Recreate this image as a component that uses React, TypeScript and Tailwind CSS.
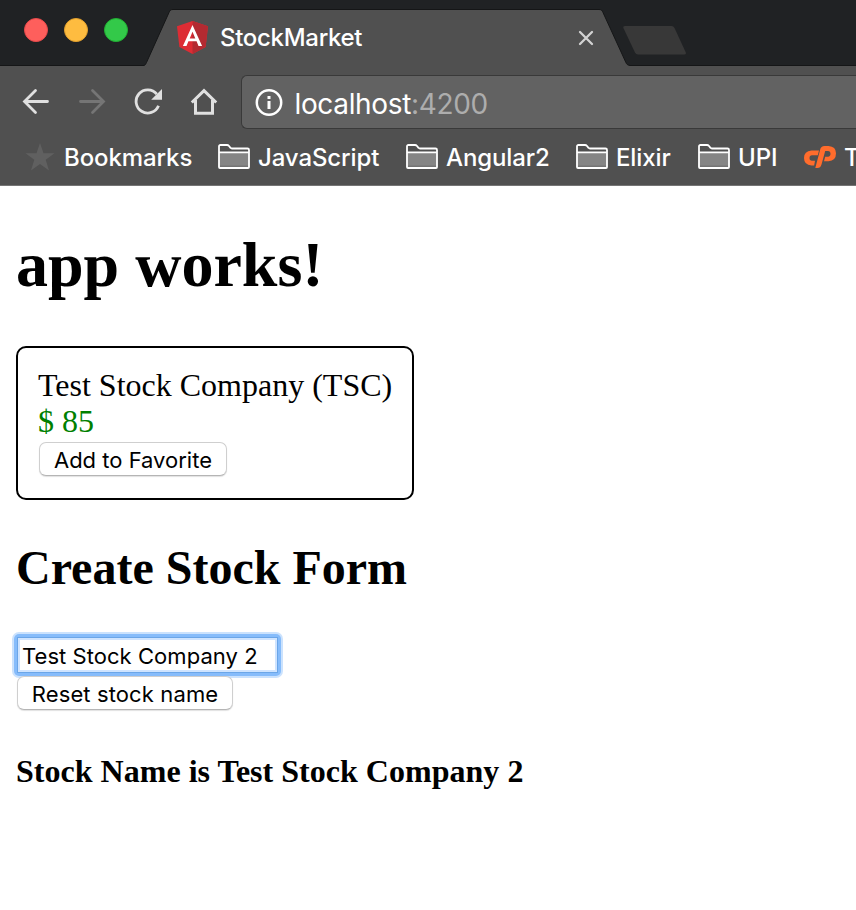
import React from "react";

function TrafficLight({ className }: { className: string }) {
  return <span className={`size-6 rounded-full border ${className}`} />;
}

function AngularLogo() {
  return (
    <svg width="31" height="33" viewBox="0 0 31 33" className="shrink-0">
      <path d="M15.5 0 31 5.3 28.6 26 15.5 33 2.4 26 0 5.3Z" fill="#dd2c34" />
      <path d="M15.5 0 31 5.3 28.6 26 15.5 33Z" fill="#b32a31" />
      <path
        d="M15.5 3.9 5.9 25.1h3.6l1.9-4.8h8.2l1.9 4.8h3.6ZM15.5 10.7l2.8 6.7h-5.6Z"
        fill="#fff"
        fillRule="evenodd"
      />
    </svg>
  );
}

function TabStrip() {
  return (
    <div className="flex h-[66px] bg-[#202224]">
      <div className="flex h-[66px] w-36 shrink-0 items-center gap-4 border-b border-[#151617] pb-[5px] pl-6">
        <TrafficLight className="border-[#e8494a] bg-[#fe5f5c]" />
        <TrafficLight className="border-[#e2a02c] bg-[#febc40]" />
        <TrafficLight className="border-[#20b032] bg-[#33c949]" />
      </div>
      <div className="relative flex h-[66px] w-[486px] shrink-0 items-start pl-[33px]">
        <svg className="absolute inset-0" width="486" height="66" viewBox="0 0 486 66">
          <path
            d="M0 65.500C1.200 65.300 1.800 64 2.600 62.300L25 12.500C26 10.500 26.500 9.500 29 9.500H455C457.500 9.500 458 10.500 459 12.500L481.800 62.300C482.600 64 483.300 65.300 486 65.500V67H0Z"
            fill="#505050"
          />
          <path
            d="M0 65.500C1.200 65.300 1.800 64 2.600 62.300L25 12.500C26 10.500 26.500 9.500 29 9.500H455C457.500 9.500 458 10.500 459 12.500L481.800 62.300C482.600 64 483.300 65.300 486 65.500"
            fill="none"
            stroke="#151617"
            strokeWidth="1"
          />
        </svg>
        <div className="relative mt-[21px] flex h-[33px] w-[420px] items-center">
          <AngularLogo />
          <span className="ml-3 mt-px w-[365px] text-2xl font-medium tracking-[-0.3px] text-white">StockMarket</span>
        </div>
        <svg className="absolute left-[434px] top-[30px]" width="16" height="16" viewBox="0 0 16 16">
          <path d="M2 2 14 14M14 2 2 14" stroke="#d2d2d2" strokeWidth="2.3" strokeLinecap="round" />
        </svg>
      </div>
      <div className="h-[66px] grow border-b border-[#151617]">
        <svg width="68" height="60" viewBox="0 0 68 60" className="-ml-[9px]">
          <path d="M4 26H50.500Q52.500 26 53.500 28L64.800 52.500Q65.500 54.500 63.500 54.500H17Q15 54.500 14 52.500L2.400 28Q1.800 26 4 26Z" fill="#383838" />
        </svg>
      </div>
    </div>
  );
}

function Toolbar() {
  return (
    <div className="flex h-[63px] items-center pl-[22px] pt-[9px]">
      <div className="flex w-[219px] shrink-0 gap-7">
        <svg width="28" height="28" viewBox="0 0 28 28" fill="none" stroke="#e0e0e0" strokeWidth="2.8" strokeLinecap="round">
          <path d="M13.500 2.500 2.500 13.500 13.500 24.500M3 13.500H25.500" />
        </svg>
        <svg width="28" height="28" viewBox="0 0 28 28" fill="none" stroke="#757575" strokeWidth="2.800" strokeLinecap="round">
          <path d="M14.500 2.500 25.500 13.500 14.500 24.500M25 13.500H2.500" />
        </svg>
        <svg width="28" height="28" viewBox="0 0 28 28">
          <path d="M22.800 6.200A11.600 11.600 0 1 0 24.500 17.700" fill="none" stroke="#e0e0e0" strokeWidth="2.800" />
          <path d="M28 1V11.800H17.200Z" fill="#e0e0e0" />
        </svg>
        <svg width="28" height="28" viewBox="0 0 28 28" fill="none" stroke="#e0e0e0" strokeWidth="3">
          <path d="M1.800 14.500 14 2.700 26.200 14.500M5.500 12V25.300H22.500V12" />
        </svg>
      </div>
      <div className="flex h-[54px] min-w-0 grow items-center rounded-l-md border border-r-0 border-[#393939] bg-[#626262] pl-[12.500px]">
        <svg width="28" height="28" viewBox="0 0 28 28" className="shrink-0">
          <circle cx="14" cy="14.500" r="12.200" fill="none" stroke="#fff" strokeWidth="2.500" />
          <path d="M14 8V11M14 13V21" stroke="#fff" strokeWidth="3" />
        </svg>
        <span className="ml-[12px] mt-[3px] text-[28px] leading-8 tracking-[-0.35px] text-white">
          localhost<span className="text-[#adadad]">:4200</span>
        </span>
      </div>
    </div>
  );
}

function Folder() {
  return (
    <svg width="32" height="26" viewBox="0 0 32 26" className="shrink-0">
      <path d="M1 9H31V24H1Z" fill="#858585" />
      <path d="M1 21.500H31V24H1Z" fill="#747474" />
      <path
        d="M1 23V2.500Q1 1 2.500 1H9Q10.200 1 11 2L12.500 3.800Q13 4.500 14 4.500H29.500Q31 4.500 31 6V23Q31 24 30 24H2Q1 24 1 23ZM1 8.300H31"
        fill="none"
        stroke="#fff"
        strokeWidth="1.800"
      />
    </svg>
  );
}

function Bookmark({ label, width }: { label: string; width: string }) {
  return (
    <div className={`flex shrink-0 items-center ${width}`}>
      <Folder />
      <span className="ml-2 mt-0.5">{label}</span>
    </div>
  );
}

function BookmarkBar() {
  return (
    <div className="flex h-14 items-center overflow-hidden whitespace-nowrap pl-[25px] text-2xl font-medium tracking-[-0.1px] text-white">
      <svg width="30" height="28" viewBox="0 0 30 28" className="shrink-0">
        <path d="M15 0 18.500 10.200H29.500L20.700 16.800 24 27.500 15 21 6 27.500 9.300 16.800 .5 10.200H11.500Z" fill="#606060" />
      </svg>
      <span className="ml-[9px] mt-0.5 w-[154px] shrink-0">Bookmarks</span>
      <Bookmark label="JavaScript" width="w-[188px]" />
      <Bookmark label="Angular2" width="w-[170px]" />
      <Bookmark label="Elixir" width="w-[122px]" />
      <Bookmark label="UPI" width="w-[106px]" />
      <svg width="33" height="22" viewBox="0 0 33 22" className="shrink-0" fill="#ff6c2c">
        <path d="M7.500 4.500H15L13.800 9.200H8Q5.500 9.200 5.500 12 5.500 14.800 8 14.800H11L10.200 19.500H7.500Q0 19 0 12 0 5 7.500 4.500Z" />
        <path d="M11.300 22 16.100 3.700Q17 0 20.500 0H24.500Q32 .5 32 7.300 32 14.800 24.500 15.300H20L21.200 10.700H24Q26.500 10.500 26.500 7.800 26.500 4.900 24 4.900H21.200L17.500 18.500Q16.500 22 13.500 22Z" />
      </svg>
      <span className="ml-[7px] mt-0.5">T</span>
    </div>
  );
}

function MacButton({ className, children }: { className: string; children: React.ReactNode }) {
  return (
    <button
      className={`flex items-center justify-center whitespace-nowrap rounded-[7px] border border-[#cfcfcf] border-b-[#b5b5b5] bg-white pt-0.5 font-['Inter','Liberation_Sans',sans-serif] text-[22px] leading-7 text-black shadow-[0_1px_1px_rgba(0,0,0,0.12)] ${className}`}
    >
      {children}
    </button>
  );
}

export default function App() {
  return (
    <div className="h-[910px] w-[856px] overflow-hidden bg-white font-['Inter','Liberation_Sans',sans-serif]">
      <header className="h-[186px] border-b border-[#757575] bg-[#505050]">
        <TabStrip />
        <Toolbar />
        <BookmarkBar />
      </header>
      <main className="pl-4 pt-[43px] font-['Liberation_Serif',serif] text-[32px] leading-9 text-black">
        <h1 className="text-[64px] font-bold leading-[72px]">app works!</h1>
        <section className="mt-[45px] h-[154px] w-[398px] rounded-[10px] border-2 border-black px-5 pt-[19px]">
          <div className="whitespace-nowrap">Test Stock Company (TSC)</div>
          <div className="text-[#008000]">$ 85</div>
          <MacButton className="ml-px mt-[3px] h-[34px] w-[188px]">Add to Favorite</MacButton>
        </section>
        <h2 className="mt-[41px] text-5xl font-bold leading-[54px]">Create Stock Form</h2>
        <div className="-ml-1 mt-[37px] w-[271px] rounded-[7px] bg-[#cbe2fd] p-0.5">
          <div className="rounded-[5px] bg-[#86bcfb] p-[3px]">
            <input
              className="block h-9 w-[261px] border border-[#6ba6e8] bg-white pl-1 pt-0.5 font-['Inter','Liberation_Sans',sans-serif] text-[22px] tracking-[0.05px] text-black shadow-[inset_0_0_0_2px_#cfe4ff] outline-none"
              defaultValue="Test Stock Company 2"
            />
          </div>
        </div>
        <MacButton className="relative -mt-0.5 ml-px h-[34px] w-[216px] tracking-[0.12px]">Reset stock name</MacButton>
        <h3 className="mt-[43px] whitespace-nowrap font-bold tracking-[0.02px]">Stock Name is Test Stock Company 2</h3>
      </main>
    </div>
  );
}
